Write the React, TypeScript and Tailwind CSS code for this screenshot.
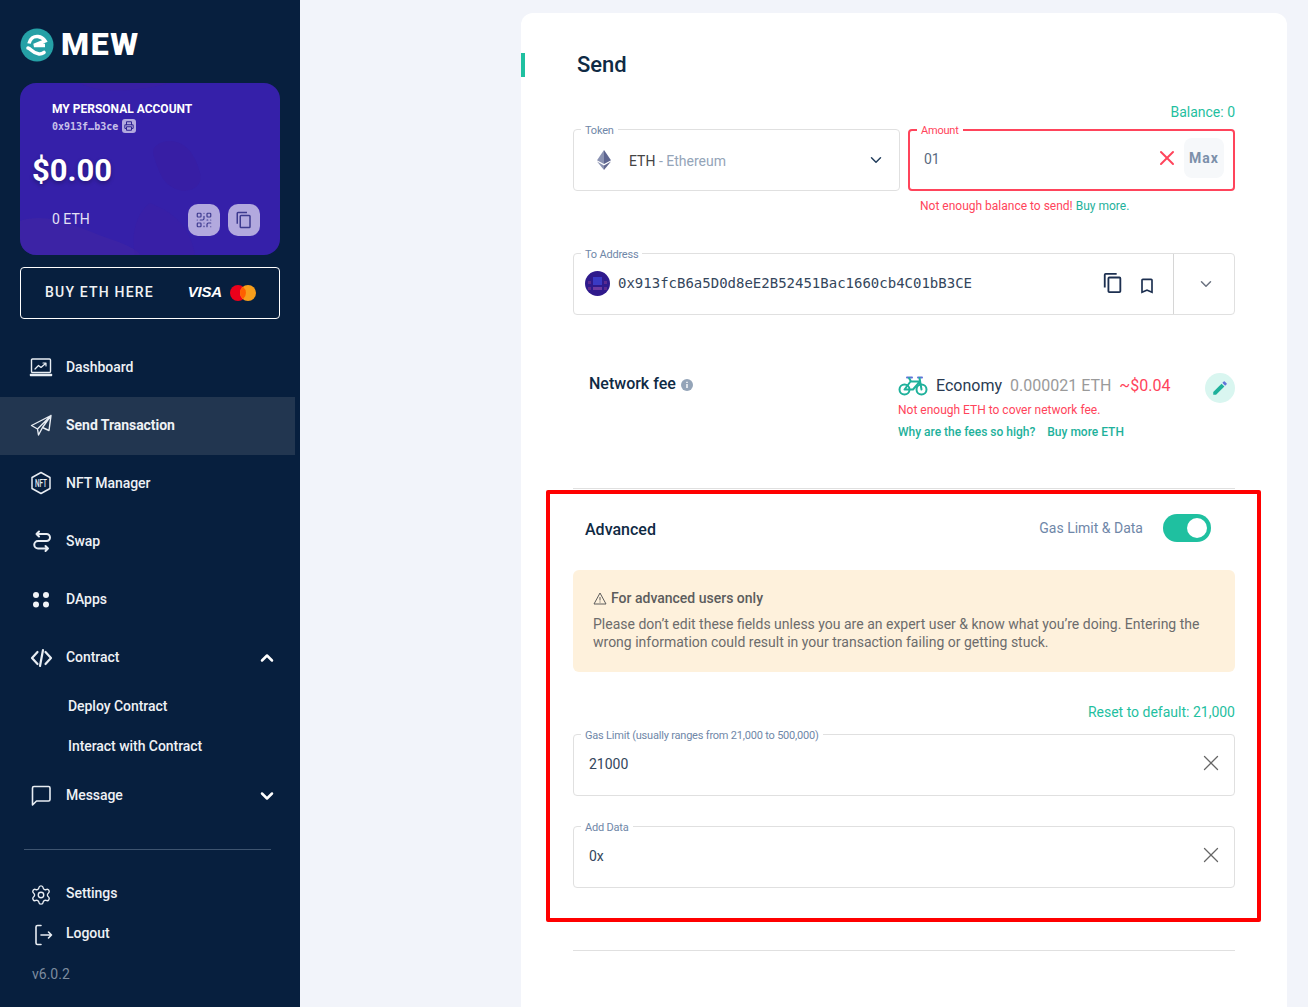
import React from "react";
import { ChevronDown, ChevronUp, Printer, QrCode, Settings, X } from "lucide-react";

const Stroke = ({ children, size = 24 }: { children: React.ReactNode; size?: number }) => (
  <svg width={size} height={size} viewBox="0 0 24 24" fill="none" stroke="#e8edf3" strokeWidth={1.4} strokeLinecap="round" strokeLinejoin="round">
    {children}
  </svg>
);

const CopyGlyph = ({ size, color }: { size: number; color: string }) => (
  <svg width={size} height={size} viewBox="0 0 24 24" fill={color}>
    <path d="M16 1H4a2 2 0 0 0-2 2v14h2V3h12V1zm3 4H8a2 2 0 0 0-2 2v14a2 2 0 0 0 2 2h11a2 2 0 0 0 2-2V7a2 2 0 0 0-2-2zm0 16H8V7h11v14z" />
  </svg>
);

const icons: Record<string, React.ReactNode> = {
  dashboard: (
    <Stroke>
      <rect x="2.500" y="4" width="19" height="13.500" rx="1" />
      <path d="M1.500 19.500h21v1h-21z" />
      <path d="M6 14l3.500-3.500 2.500 2 4.500-4M14 8h3v3" strokeWidth={1.2} />
    </Stroke>
  ),
  send: (
    <Stroke>
      <path d="M22 2.500 2.500 12.500l6 3.500L22 2.500zM22 2.500 20 17.500l-6.500-3L22 2.500zM8.500 16l1 6 4-7.500" />
    </Stroke>
  ),
  nft: (
    <svg width="24" height="24" viewBox="0 0 24 24" fill="none">
      <path d="M12 1.500 21 6.500v11l-9 5-9-5v-11z" stroke="#e8edf3" strokeWidth="1.500" strokeLinejoin="round" />
      <text x="12" y="16" textAnchor="middle" fontSize="10" textLength="12" lengthAdjust="spacingAndGlyphs" fontWeight="500" fill="#e8edf3" fontFamily="Roboto, sans-serif">NFT</text>
    </svg>
  ),
  swap: (
    <Stroke>
      <path d="M10 2.500 7.500 5l2.500 2.500M7.500 5H17.500a3.500 3.500 0 0 1 0 7H9a3.700 3.700 0 0 0 0 7.500h10M16.500 17l2.500 2.500-2.500 2.500" strokeWidth={2} />
    </Stroke>
  ),
  dapps: (
    <svg width="24" height="24" viewBox="0 0 24 24" fill="#f2f5f8">
      <circle cx="7" cy="8" r="3" />
      <circle cx="17" cy="8" r="3" />
      <circle cx="7" cy="17.500" r="3" />
      <circle cx="17" cy="17.500" r="3" />
    </svg>
  ),
  code: (
    <Stroke>
      <path d="M8.500 7 3 13l5.500 6M16.500 7 22 13l-5.500 6M14 5 11 21" strokeWidth={2.200} />
    </Stroke>
  ),
  message: (
    <Stroke>
      <path d="M3.500 5A1.500 1.500 0 0 1 5 3.500h14.500A1.500 1.500 0 0 1 21 5v11.500a1.500 1.500 0 0 1-1.500 1.500H7.500l-4 4z" strokeWidth={1.600} />
    </Stroke>
  ),
  settings: <Settings size={22} color="#e8edf3" strokeWidth={1.500} />,
  logout: (
    <Stroke>
      <path d="M11 2.500H7.500A1.500 1.500 0 0 0 6 4v16a1.500 1.500 0 0 0 1.500 1.500H11M11 12h10.500M18.500 9l3 3-3 3" strokeWidth={1.600} />
    </Stroke>
  ),
};

const NavRow = ({ icon, label, active, chevron, bottom }: { icon: string; label: string; active?: boolean; chevron?: "up" | "down"; bottom?: boolean }) => (
  <div className={`flex items-center pl-[29px] pr-[23px] text-[14px] text-[#eef1f5] ${bottom ? "h-[40px]" : "h-[58px] pb-[2px]"} ${active ? "w-[295px] bg-[#223650] font-bold" : "font-medium"}`}>
    <span className={`flex w-[37px] shrink-0 items-center ${bottom ? "translate-x-[1px] translate-y-[2px]" : ""}`}>{icons[icon]}</span>
    <span className="flex-1 tracking-[-0.05px]">{label}</span>
    {chevron === "up" && <ChevronUp size={20} strokeWidth={3} color="#fff" className="mt-[2px]" />}
    {chevron === "down" && <ChevronDown size={20} strokeWidth={3} color="#fff" className="mt-[2px]" />}
  </div>
);

const SubRow = ({ label }: { label: string }) => (
  <div className="flex h-[40px] items-center pb-[2px] pl-[68px] text-[14px] font-medium tracking-[-0.05px] text-[#eef1f5]">{label}</div>
);

const Field = ({ label, children, error, className = "" }: { label: string; children: React.ReactNode; error?: boolean; className?: string }) => (
  <div className={`relative flex h-[62px] items-center rounded-[4px] ${error ? "border-2 border-[#ff445b]" : "border border-[#e0e0e0]"} ${className}`}>
    <span className={`absolute ${error ? "left-[7px] top-[-7px] text-[#ff445b]" : "left-[7px] top-[-6px] text-[#6f87a8]"} bg-white px-[4px] text-[11px] leading-[14px] tracking-[-0.2px]`}>{label}</span>
    {children}
  </div>
);

const EthIcon = () => (
  <svg width="14" height="20" viewBox="0 0 14 20">
    <path d="M7 0 0 10.200l7 3.800z" fill="#8a92b2" />
    <path d="M7 0l7 10.200L7 14z" fill="#5d6590" />
    <path d="M0 11.500 7 20v-4.400z" fill="#8a92b2" />
    <path d="M14 11.500 7 20v-4.400z" fill="#62688f" />
  </svg>
);

const Avatar = () => (
  <svg width="25" height="25" viewBox="0 0 25 25" className="shrink-0">
    <circle cx="12.500" cy="12.500" r="12.500" fill="#2f1a8c" />
    <rect x="8" y="6" width="9" height="8" fill="#3a3ac4" />
    <rect x="3" y="10" width="3" height="3" fill="#5b2a8f" />
    <rect x="19" y="10" width="3" height="3" fill="#5b2a8f" />
    <rect x="8" y="16" width="9" height="3" fill="#6d3aa0" />
    <rect x="3" y="16" width="3" height="3" fill="#5b2a8f" />
    <rect x="19" y="16" width="3" height="3" fill="#5b2a8f" />
  </svg>
);

const Bike = () => (
  <svg width="30" height="22" viewBox="0 0 30 22" fill="none" strokeLinecap="round" strokeLinejoin="round">
    <path d="M9 2.500h5" stroke="#5f74d9" strokeWidth="2" />
    <path d="M20 2.500h4" stroke="#5f74d9" strokeWidth="2" />
    <circle cx="6.500" cy="14.500" r="5" stroke="#1eb19b" strokeWidth="2" />
    <circle cx="23.500" cy="14.500" r="5" stroke="#1eb19b" strokeWidth="2" />
    <path d="M11 3l2 3.500M21.500 3l2 11.500M6.500 14.500 12.500 6.500h9.500L15 14.500H6.500z" stroke="#1eb19b" strokeWidth="2" />
  </svg>
);

const Logo = () => (
  <div className="flex h-[34px] items-center">
    <svg width="34" height="34" viewBox="0 0 34 34" className="shrink-0">
      <circle cx="17" cy="17" r="16.500" fill="#25a0a6" />
      <path d="M9 15.500C10 10.500 14 8 18 8.500c3 .4 5.500 2 7 4.500L14 17.500h11" fill="none" stroke="#fff" strokeWidth="3.600" />
      <path d="M8 20c3 .5 4 5 11 6 2 .2 3.500-.5 5-1.500" fill="none" stroke="#fff" strokeWidth="3.600" strokeLinecap="round" />
    </svg>
    <span className="mb-[2px] ml-[7px] text-[32px] font-black leading-none tracking-[1.6px] text-white">MEW</span>
  </div>
);

const Sidebar = () => (
  <aside className="flex w-[300px] shrink-0 flex-col bg-[#071f3e]">
    <div className="pl-[20px] pt-[28px]">
      <Logo />
    </div>
    <div className="relative mx-[20px] mt-[21px] h-[172px] overflow-hidden rounded-[16px] bg-[#3520a9]">
      <svg className="absolute inset-0" width="260" height="172" viewBox="0 0 260 172" fill="none">
        <path d="M0 138c30-10 60 8 90 18s30 16 30 16H0z" fill="#4a2a9e" opacity=".35" />
        <path d="M130 120c25 10 40 24 45 52h-60c-4-20 0-40 15-52z" fill="#3f1fa0" opacity=".3" />
        <path d="M140 60c20-8 35 8 40 30s-30 25-40 0-8-24 0-30z" fill="#3a1ba0" opacity=".5" />
        <path d="M60 0c20 12 60 8 90 0z" fill="#3e209f" opacity=".5" />
      </svg>
      <div className="relative flex h-full flex-col">
        <div className="pl-[32px] pt-[18px] text-[12px] font-bold leading-[16px] text-white">MY PERSONAL ACCOUNT</div>
        <div className="flex h-[16px] items-center pl-[32px] pt-[2px]">
          <span className="text-[10px] font-bold text-[#c8c0ea] [font-family:'DejaVu_Sans_Mono',monospace]">0x913f…b3ce</span>
          <span className="ml-[4px] flex h-[14px] w-[14px] items-center justify-center rounded-[3px] bg-[#b2a9de]">
            <Printer size={10} color="#2f2490" strokeWidth={2.500} />
          </span>
        </div>
        <div className="pl-[12px] pt-[19px] text-[31px] font-bold leading-[38px] text-white [text-shadow:0_2px_4px_rgba(0,0,0,0.3)]">$0.00</div>
        <div className="flex items-center pl-[32px] pr-[20px] pt-[14px]">
          <span className="mb-[2px] flex-1 text-[14px] text-[#e4e0f5]">0 ETH</span>
          <span className="flex h-[32px] w-[32px] items-center justify-center rounded-[10px] bg-[#b2a9de]">
            <QrCode size={18} color="#3d3a8f" strokeWidth={1.600} />
          </span>
          <span className="ml-[8px] flex h-[32px] w-[32px] items-center justify-center rounded-[10px] bg-[#b2a9de]">
            <CopyGlyph size={18} color="#3d3a8f" />
          </span>
        </div>
      </div>
    </div>
    <div className="mx-[20px] mt-[12px] flex h-[52px] items-center rounded-[4px] border border-white pb-[2px] pl-[24px] pr-[23px]">
      <span className="flex-1 text-[14px] font-medium tracking-[1.2px] text-[#f0f2f5]">BUY ETH HERE</span>
      <span className="text-[15px] font-black italic tracking-[-0.2px] text-white [font-family:'Liberation_Sans',sans-serif]">VISA</span>
      <svg width="26" height="16" viewBox="0 0 26 16" className="ml-[8px] mt-[2px]">
        <circle cx="8" cy="8" r="8" fill="#eb001b" />
        <circle cx="18" cy="8" r="8" fill="#f79e1b" />
        <path d="M13 1.800a8 8 0 0 1 0 12.400 8 8 0 0 1 0-12.400z" fill="#ff5f00" />
      </svg>
    </div>
    <nav className="mt-[20px]">
      <NavRow icon="dashboard" label="Dashboard" />
      <NavRow icon="send" label="Send Transaction" active />
      <NavRow icon="nft" label="NFT Manager" />
      <NavRow icon="swap" label="Swap" />
      <NavRow icon="dapps" label="DApps" />
      <NavRow icon="code" label="Contract" chevron="up" />
      <SubRow label="Deploy Contract" />
      <SubRow label="Interact with Contract" />
      <NavRow icon="message" label="Message" chevron="down" />
    </nav>
    <div className="ml-[24px] mt-[24px] h-px w-[247px] bg-[#3e546f]" />
    <div className="mt-[23px]">
      <NavRow icon="settings" label="Settings" bottom />
      <NavRow icon="logout" label="Logout" bottom />
    </div>
    <div className="pl-[32px] pt-[11px] text-[14px] leading-[20px] text-[#7d8c9f]">v6.0.2</div>
  </aside>
);

const SendPanel = () => (
  <section className="relative h-[994px] w-[766px] overflow-hidden rounded-t-[12px] bg-white px-[52px]">
    <div className="absolute left-0 top-[40px] h-[24px] w-[4px] bg-[#1fc0a0]" />
    <h1 className="pl-[4px] pt-[38px] text-[22px] font-medium leading-[28px] text-[#0f2a44]">Send</h1>
    <div className="mt-[23px] h-[20px] text-right text-[14px] leading-[20px] text-[#1fc0a0]">Balance: 0</div>
    <div className="mt-[7px] flex gap-[8px]">
      <Field label="Token" className="w-[327px]">
        <span className="ml-[23px] flex w-[32px] shrink-0"><EthIcon /></span>
        <span className="mt-[2px] flex-1 text-[14px] text-[#444]">
          ETH <span className="text-[#94a4b8]">- Ethereum</span>
        </span>
        <ChevronDown size={18} strokeWidth={2} color="#25405f" className="mr-[14px]" />
      </Field>
      <Field label="Amount" error className="w-[327px]">
        <span className="mb-[2px] ml-[14px] flex-1 text-[14px] text-[#5a6b80]">01</span>
        <X size={24} strokeWidth={2} color="#ff445b" className="mb-[4px] mr-[5px]" />
        <span className="mb-[4px] mr-[9px] flex h-[40px] w-[40px] items-center justify-center rounded-[8px] bg-[#f6f8fa] text-[14px] font-bold tracking-[1.100px] text-[#7c90aa]">Max</span>
      </Field>
    </div>
    <div className="ml-[347px] mt-[7px] h-[16px] text-[12px] leading-[16px] text-[#ff445b]">
      Not enough balance to send! <span className="text-[#1eb19b]">Buy more.</span>
    </div>
    <Field label="To Address" className="mt-[39px]">
      <span className="mb-[2px] ml-[11px]"><Avatar /></span>
      <span className="mb-[2px] ml-[8px] flex-1 text-[14px] text-[#34465c] [font-family:'DejaVu_Sans_Mono',monospace]">0x913fcB6a5D0d8eE2B52451Bac1660cb4C01bB3CE</span>
      <span className="mb-[2px] mr-[13px] flex"><CopyGlyph size={22} color="#1c2f50" /></span>
      <svg width="20" height="20" viewBox="0 0 24 24" fill="#1c2f50" className="mr-[16px] mt-[3px]">
        <path d="M17 3H7c-1.100 0-2 .9-2 2v16l7-3 7 3V5c0-1.100-.9-2-2-2zm0 15l-5-2.180L7 18V5h10v13z" />
      </svg>
      <span className="flex h-full w-[61px] items-center justify-center border-l border-[#d6d6d6] pl-[4px]">
        <ChevronDown size={18} strokeWidth={2} color="#6b7280" />
      </span>
    </Field>
    <div className="mt-[58px] flex">
      <div className="flex h-[22px] w-[325px] items-center pl-[16px]">
        <span className="text-[16px] font-medium text-[#0f2a44]">Network fee</span>
        <svg width="12" height="12" viewBox="0 0 12 12" className="ml-[5px] mt-[1px]">
          <circle cx="6" cy="6" r="6" fill="#94a4b8" />
          <path d="M5.300 5h1.400v4H5.300zM5.300 2.800h1.400v1.300H5.300z" fill="#fff" />
        </svg>
      </div>
      <div className="flex-1">
        <div className="flex h-[26px] items-center text-[16px]">
          <Bike />
          <span className="ml-[8px] text-[#2a3b52]">Economy</span>
          <span className="ml-[8px] text-[#9a9a9a]">0.000021 ETH</span>
          <span className="ml-[8px] text-[#ff445b]">~$0.04</span>
        </div>
        <div className="mt-[3px] h-[16px] text-[12px] leading-[16px] text-[#ff445b]">Not enough ETH to cover network fee.</div>
        <div className="mt-[6px] flex h-[16px] gap-[12px] text-[12px] font-medium leading-[16px] text-[#1eb19b]">
          <span>Why are the fees so high?</span>
          <span>Buy more ETH</span>
        </div>
      </div>
      <span className="flex h-[30px] w-[30px] items-center justify-center rounded-full bg-[#d9f6f0]">
        <svg width="18" height="18" viewBox="0 0 24 24">
          <path d="M3 17.250V21h3.750L17.810 9.940l-3.750-3.750L3 17.250z" fill="#1eb19b" />
          <path d="M20.710 7.040a1 1 0 0 0 0-1.410l-2.340-2.340a1 1 0 0 0-1.410 0l-1.830 1.830 3.750 3.750z" fill="#5f74d9" />
        </svg>
      </span>
    </div>
    <div className="mt-[48px] h-px bg-[#e0e0e0]" />
    <div className="mt-[19px] flex h-[40px] items-center pl-[12px] pr-[24px]">
      <span className="mt-[4px] flex-1 text-[16px] font-medium text-[#0f2a44]">Advanced</span>
      <span className="mr-[20px] text-[14px] text-[#6f87a8]">Gas Limit &amp; Data</span>
      <span className="flex h-[28px] w-[48px] items-center justify-end rounded-full bg-[#1fc0a0] pr-[4px]">
        <span className="h-[20px] w-[20px] rounded-full bg-white" />
      </span>
    </div>
    <div className="mt-[22px] h-[102px] rounded-[6px] bg-[#fef1dc] px-[20px] pt-[18px]">
      <div className="flex h-[20px] items-center text-[14px] font-medium text-[#5c5c5c]">
        <svg width="14" height="13" viewBox="0 0 14 13" fill="none" stroke="#5c5c5c" className="mr-[4px]">
          <path d="M7 1 13 12H1z M7 5v3.500M7 9.500v1" />
        </svg>
        For advanced users only
      </div>
      <p className="mt-[7px] text-[14px] leading-[18px] text-[#6c6c6c]">
        Please don’t edit these fields unless you are an expert user &amp; know what you’re doing. Entering the wrong information could result in your transaction failing or getting stuck.
      </p>
    </div>
    <div className="mt-[30px] h-[20px] text-right text-[14px] leading-[20px] text-[#1fc0a0]">Reset to default: 21,000</div>
    <Field label="Gas Limit (usually ranges from 21,000 to 500,000)" className="mt-[12px]">
      <span className="mb-[1px] ml-[15px] flex-1 text-[14px] text-[#34465c]">21000</span>
      <X size={26} strokeWidth={1.200} color="#666" className="mb-[5px] mr-[10px]" />
    </Field>
    <Field label="Add Data" className="mt-[30px]">
      <span className="mb-[1px] ml-[15px] flex-1 text-[14px] text-[#34465c]">0x</span>
      <X size={26} strokeWidth={1.200} color="#666" className="mb-[5px] mr-[10px]" />
    </Field>
    <div className="mt-[62px] h-px bg-[#e0e0e0]" />
    <div className="pointer-events-none absolute left-[25px] top-[477px] h-[432px] w-[715px] rounded-[2px] border-[4px] border-[#ff0000]" />
  </section>
);

export default function App() {
  return (
    <div className="flex h-[1007px] w-[1308px] overflow-hidden bg-[#f2f4fa] [font-family:Roboto,sans-serif]">
      <Sidebar />
      <main className="flex-1 pl-[221px] pt-[13px]">
        <SendPanel />
      </main>
    </div>
  );
}
